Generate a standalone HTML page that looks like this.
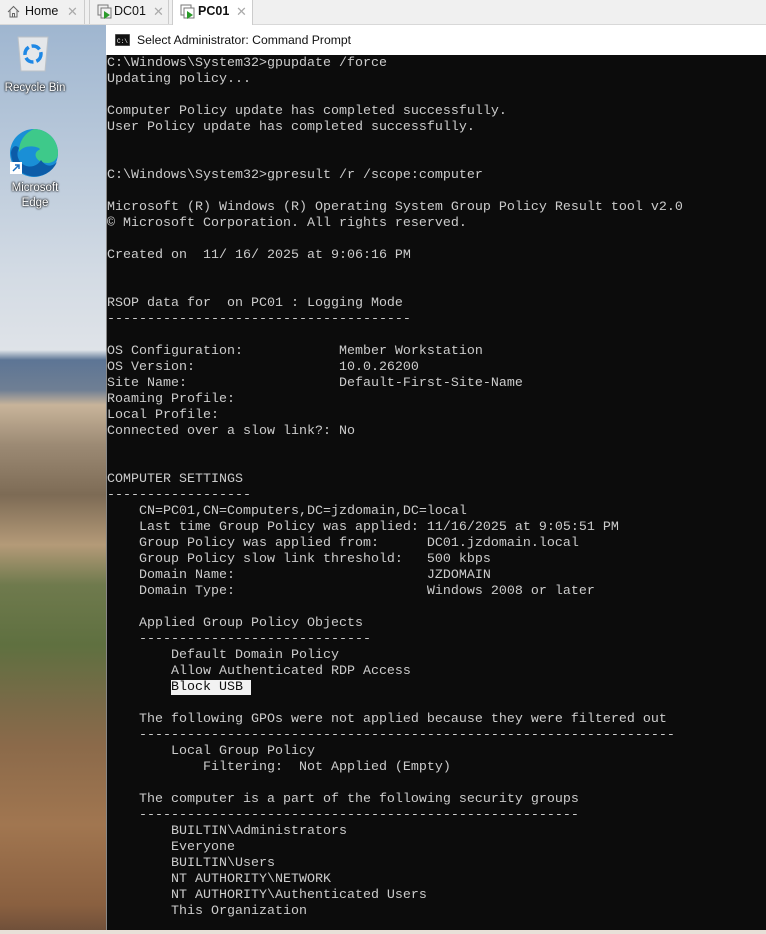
<!DOCTYPE html>
<html><head><meta charset="utf-8"><style>
body{margin:0;width:766px;height:934px;overflow:hidden;position:relative;background:#fff;font-family:"Liberation Sans",sans-serif}
.tabs{position:absolute;left:0;top:0;width:766px;height:24px;background:#f0f0f0;border-bottom:1px solid #d8d8d8}
.tab{position:absolute;top:0;height:24px;font-size:12.5px;line-height:23px;color:#111}
.x{position:absolute;top:0;color:#aaa;font-size:13px}
.wall{position:absolute;left:0;top:25px;width:106px;height:905px;background:linear-gradient(180deg,#9fb6d0 0px,#b8c8da 120px,#d3dbe4 250px,#dfe3e8 325px,#5d7595 335px,#6f7f94 365px,#c8b49a 380px,#9c8a74 420px,#7d6b55 470px,#b49a78 520px,#6f7a4d 560px,#5f7040 620px,#7a6a48 680px,#8b6a4a 720px,#a17650 800px,#8a6040 880px,#70503a 905px)}
.title{position:absolute;left:107px;top:25px;width:659px;height:30px;background:#fff;font-size:12.2px}
.con{position:absolute;left:106px;top:55px;width:660px;height:875px;background:#0c0c0c;border-left:1px solid #888}
pre{margin:0;position:absolute;left:0;top:1px;font-family:"Liberation Mono",monospace;font-size:13.33px;line-height:16px;color:#cccccc}
.hl{background:#f2f2f2;color:#0c0c0c}
.bot{position:absolute;left:0;top:930px;width:766px;height:4px;background:#e8e0d8}
.lbl{position:absolute;color:#fff;font-size:11.5px;text-align:center;width:70px;text-shadow:0 0 2px #000,0 0 2px #000}
</style></head><body>
<div class="tabs">
 <div class="tab" style="left:0;width:84px;border-right:1px solid #ccc"><svg style="position:absolute;left:7px;top:5px" width="13" height="13" viewBox="0 0 13 13"><path d="M1 7L6.5 1.5 12 7M3 5.5V12h7V5.5M5.5 12V8.5h2V12" fill="none" stroke="#666"/></svg><span style="position:absolute;left:25px">Home</span><span class="x" style="left:67px">✕</span></div>
 <div class="tab" style="left:89px;width:78px;border-left:1px solid #ccc;border-right:1px solid #ccc"><svg style="position:absolute;left:7px;top:4px" width="16" height="16"><rect x="1" y="1" width="10" height="10" fill="none" stroke="#777"/><rect x="4" y="4" width="10" height="10" fill="#f0f0f0" stroke="#777"/><path d="M7 7l6 4-6 4z" fill="#2a9a2a"/></svg><span style="position:absolute;left:24px">DC01</span><span class="x" style="left:63px">✕</span></div>
 <div class="tab" style="left:172px;width:79px;height:25px;background:#fff;border-left:1px solid #ccc;border-right:1px solid #ccc"><svg style="position:absolute;left:7px;top:4px" width="16" height="16"><rect x="1" y="1" width="10" height="10" fill="none" stroke="#777"/><rect x="4" y="4" width="10" height="10" fill="#fff" stroke="#777"/><path d="M7 7l6 4-6 4z" fill="#2a9a2a"/></svg><b style="position:absolute;left:25px">PC01</b><span class="x" style="left:63px">✕</span></div>
</div>
<div class="wall"></div>
<svg style="position:absolute;left:16px;top:34px" width="34" height="40"><path d="M2 3h30l-3 34H5z" fill="#e4e7ea" stroke="#bcc2c8"/><circle cx="17" cy="20" r="8" fill="none" stroke="#1e88e5" stroke-width="3.5" stroke-dasharray="9 3"/></svg>
<div class="lbl" style="left:0;top:82px">Recycle Bin</div>
<svg style="position:absolute;left:9px;top:128px" width="50" height="50"><circle cx="25" cy="25" r="24" fill="#1a8fd6"/><path d="M25 1a24 24 0 0 1 24 24c0 8-8 12-16 9s-8-10-3-12-14-8-20 2A24 24 0 0 1 25 1z" fill="#3ec98a"/><path d="M10 20a12 12 0 0 0 22 12c4 6 10 8 16 2A24 24 0 0 1 2 25c0-4 4-10 8-5z" fill="#0c5ca8"/><rect x="1" y="34" width="12" height="12" fill="#fff"/><path d="M4 43l6-6M6 37h4v4" stroke="#1a6fc0" fill="none" stroke-width="1.5"/></svg>
<div class="lbl" style="left:0;top:181px;line-height:15px">Microsoft<br>Edge</div>
<div class="title"><svg style="position:absolute;left:8px;top:9px" width="15" height="12"><rect width="15" height="12" fill="#111" stroke="#888"/><text x="2" y="9" font-size="6" fill="#fff" font-family="Liberation Mono">C:\</text></svg><span style="position:absolute;left:30px;top:8px;color:#111">Select Administrator: Command Prompt</span></div>
<div class="con"><pre>C:\Windows\System32&gt;gpupdate /force
Updating policy...

Computer Policy update has completed successfully.
User Policy update has completed successfully.


C:\Windows\System32&gt;gpresult /r /scope:computer

Microsoft (R) Windows (R) Operating System Group Policy Result tool v2.0
© Microsoft Corporation. All rights reserved.

Created on  11/ 16/ 2025 at 9:06:16 PM


RSOP data for  on PC01 : Logging Mode
--------------------------------------

OS Configuration:            Member Workstation
OS Version:                  10.0.26200
Site Name:                   Default-First-Site-Name
Roaming Profile:
Local Profile:
Connected over a slow link?: No


COMPUTER SETTINGS
------------------
    CN=PC01,CN=Computers,DC=jzdomain,DC=local
    Last time Group Policy was applied: 11/16/2025 at 9:05:51 PM
    Group Policy was applied from:      DC01.jzdomain.local
    Group Policy slow link threshold:   500 kbps
    Domain Name:                        JZDOMAIN
    Domain Type:                        Windows 2008 or later

    Applied Group Policy Objects
    -----------------------------
        Default Domain Policy
        Allow Authenticated RDP Access
        <span class="hl">Block USB </span>

    The following GPOs were not applied because they were filtered out
    -------------------------------------------------------------------
        Local Group Policy
            Filtering:  Not Applied (Empty)

    The computer is a part of the following security groups
    -------------------------------------------------------
        BUILTIN\Administrators
        Everyone
        BUILTIN\Users
        NT AUTHORITY\NETWORK
        NT AUTHORITY\Authenticated Users
        This Organization</pre></div>
<div class="bot"></div>
</body></html>
